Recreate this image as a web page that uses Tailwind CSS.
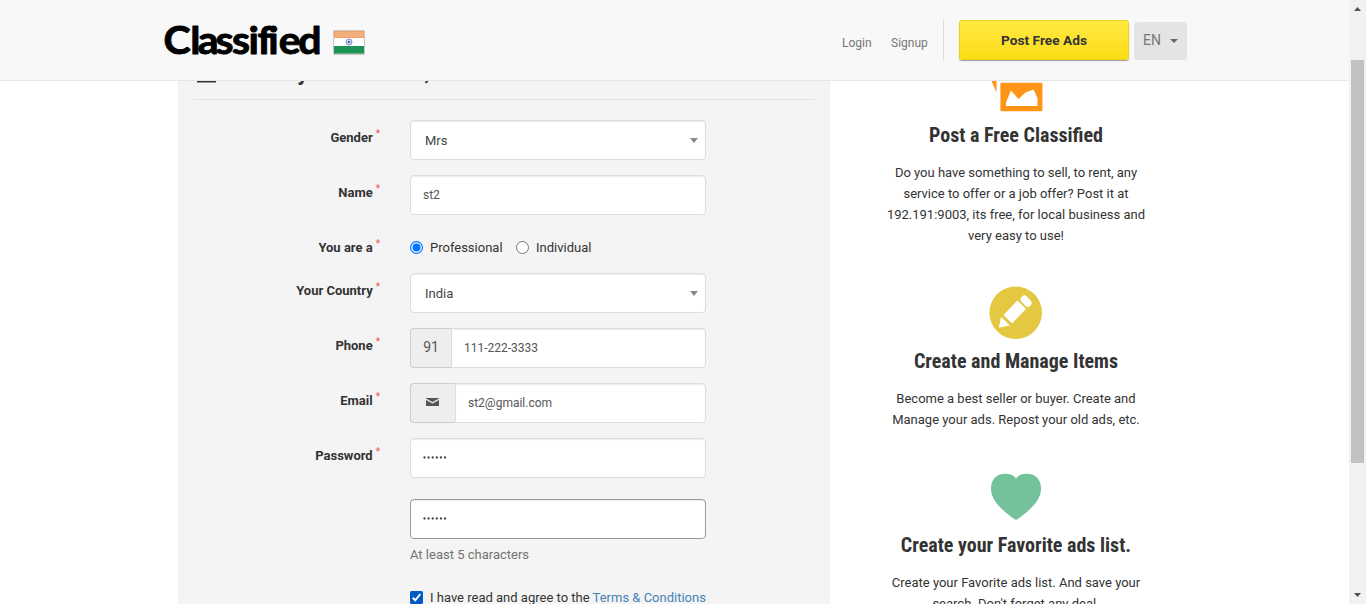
<!DOCTYPE html>
<html lang="en">
<head>
<meta charset="utf-8">
<title>Classified - Create your account</title>
<script src="https://cdn.jsdelivr.net/npm/@tailwindcss/browser@4"></script>
</head>
<body class="flex h-[604px] overflow-hidden bg-white font-['Roboto',sans-serif] text-[13px] text-[#333]">
<div class="flex w-[1349px] flex-col">
  <header class="flex h-[81px] shrink-0 border-b border-[#e7e7e7] bg-[#f8f8f8] pl-[164px]">
    <svg class="mt-[10px] h-[60px] w-[160px] shrink-0 overflow-visible" viewBox="0 0 160 60"><text transform="translate(0 43.500) scale(1.080 1)" x="-0.500 24.300 31.300 47.600 63 78.300 86.600 96.600 106.300 124.300" y="0" font-family="Lato, sans-serif" font-weight="700" font-size="38" fill="#000" stroke="#000" stroke-width=".9" stroke-linejoin="round">Classified</text></svg>
    <svg class="mt-[30px] ml-[9px] h-[25px] w-[32px] shrink-0" viewBox="0 0 32 25"><rect width="32" height="25" rx="1" fill="#c9c9c9"/><rect x="1" y="1" width="30" height="7" fill="#f2a263"/><rect x="2" y="2" width="28" height="5" fill="#f4b07c"/><rect x="1" y="8" width="30" height="8" fill="#fff"/><rect x="1" y="16" width="30" height="7.500" fill="#1a9354"/><circle cx="16" cy="12" r="3" fill="#dce3f2" stroke="#6f86bd" stroke-width=".9"/><circle cx="16" cy="12" r="1.300" fill="#4765ad"/></svg>
    <nav class="ml-[477px] flex text-[12px] text-[#777]">
      <a class="mt-[34px] w-[49px]">Login</a>
      <a class="mt-[34px] w-[52px]">Signup</a>
      <span class="mt-[20px] h-[40px] w-px bg-[#ddd]"></span>
      <a class="mt-[20px] ml-[15px] flex h-[40px] w-[170px] items-center justify-center rounded-[3px] border border-[#f0d318] bg-linear-to-b from-[#ffe93f] to-[#fcdc12] text-[13.700px] font-bold text-[#333] shadow-[0_1px_1px_#999]">Post Free Ads</a>
      <a class="mt-[22px] ml-[5px] flex h-[38px] w-[53px] items-center rounded-[3px] bg-[#e4e4e4] pb-px pl-[9px] text-[14px]">EN<svg class="mt-px ml-[9px] h-[4px] w-[8px]" viewBox="0 0 8 4"><path d="M0 0h8L4 4z" fill="#666"/></svg></a>
    </nav>
  </header>
  <div class="flex min-h-0 flex-1 overflow-hidden pl-[178px]">
    <main class="flex h-[600px] w-[652px] shrink-0 flex-col bg-[#f4f4f4] px-[15px]">
      <h2 class="-mt-[20px] flex h-[39px] shrink-0 border-b border-[#e2e2e2] pl-[4px] text-[24px] leading-[28px] font-bold whitespace-nowrap">
        <svg class="mt-[3px] mr-[6px] h-[19px] w-[19px]" viewBox="0 0 19 19"><circle cx="9.500" cy="5" r="4" fill="#333"/><path d="M0 18.500V15q0-5 5-5h9q5 0 5 5v3.500z" fill="#333"/></svg>
        <svg class="h-[30px] w-[300px] overflow-visible" viewBox="0 0 300 30"><text x="5" y="19" font-size="22" textLength="203" lengthAdjust="spacingAndGlyphs" fill="#333">Create your account,</text><text x="214" y="19" font-size="22" textLength="60" lengthAdjust="spacingAndGlyphs" fill="#333">Its free</text></svg>
      </h2>
      <form class="mt-[20px] grid shrink-0 grid-cols-[187px_296px] gap-x-[30px]">
        <label class="flex h-[55px] justify-end gap-[3px] pt-[8px] font-bold leading-[20px]">Gender<sup class="mt-px text-[10px] font-normal leading-[20px] text-[#f05050]">*</sup></label>
        <div class="flex h-[40px] items-center justify-between rounded-[4px] border border-[#ddd] bg-white pr-[7px] pl-[14px] text-[#444] shadow-[inset_0_1px_1px_#00000012]"><span class="pt-px">Mrs</span><svg class="h-[5px] w-[8px]" viewBox="0 0 8 5"><path d="M0 0h8L4 5z" fill="#888"/></svg></div>

        <label class="flex h-[55px] justify-end gap-[3px] pt-[8px] font-bold leading-[20px]">Name<sup class="mt-px text-[10px] font-normal leading-[20px] text-[#f05050]">*</sup></label>
        <div class="flex h-[40px] items-center rounded-[4px] border border-[#ddd] bg-white pl-[12px] text-[12px] text-[#555] shadow-[inset_0_1px_1px_#00000012]">st2</div>

        <label class="flex h-[43px] justify-end gap-[3px] pt-[8px] font-bold leading-[20px]">You are a<sup class="mt-px text-[10px] font-normal leading-[20px] text-[#f05050]">*</sup></label>
        <div class="flex items-start pt-[8px] leading-[20px]">
          <svg class="mt-[3px] mr-[7px] size-[13px]" viewBox="0 0 13 13"><circle cx="6.500" cy="6.500" r="5.900" fill="#fff" stroke="#0075ff" stroke-width="1.200"/><circle cx="6.500" cy="6.500" r="4" fill="#0075ff"/></svg><span class="w-[86px]">Professional</span>
          <svg class="mt-[3px] mr-[7px] size-[13px]" viewBox="0 0 13 13"><circle cx="6.500" cy="6.500" r="6" fill="#fff" stroke="#767676"/></svg>Individual
        </div>

        <label class="flex h-[55px] justify-end gap-[3px] pt-[8px] font-bold leading-[20px]">Your Country<sup class="mt-px text-[10px] font-normal leading-[20px] text-[#f05050]">*</sup></label>
        <div class="flex h-[40px] items-center justify-between rounded-[4px] border border-[#ddd] bg-white pr-[7px] pl-[14px] text-[#444] shadow-[inset_0_1px_1px_#00000012]"><span class="pt-px">India</span><svg class="h-[5px] w-[8px]" viewBox="0 0 8 5"><path d="M0 0h8L4 5z" fill="#888"/></svg></div>

        <label class="flex h-[55px] justify-end gap-[3px] pt-[8px] font-bold leading-[20px]">Phone<sup class="mt-px text-[10px] font-normal leading-[20px] text-[#f05050]">*</sup></label>
        <div class="flex h-[40px]">
          <span class="flex w-[41px] items-center justify-center rounded-l-[4px] border border-r-0 border-[#ccc] bg-[#eee] pb-px text-[14px] text-[#555]">91</span>
          <span class="flex flex-1 items-center rounded-r-[4px] border border-[#ddd] bg-white pl-[12px] text-[12px] text-[#555] shadow-[inset_0_1px_1px_#00000012]">111-222-3333</span>
        </div>

        <label class="flex h-[55px] justify-end gap-[3px] pt-[8px] font-bold leading-[20px]">Email<sup class="mt-px text-[10px] font-normal leading-[20px] text-[#f05050]">*</sup></label>
        <div class="flex h-[40px]">
          <span class="flex w-[45px] items-center justify-center rounded-l-[4px] border border-r-0 border-[#ccc] bg-[#eee]"><svg class="-mt-[2px] mr-px h-[8px] w-[13px]" viewBox="0 0 13 8"><path d="M0 0H13V.6L6.500 4 0 .6zM0 2l6.500 3.500L13 2v6H0z" fill="#555"/></svg></span>
          <span class="flex flex-1 items-center rounded-r-[4px] border border-[#ddd] bg-white pl-[12px] text-[12px] text-[#555] shadow-[inset_0_1px_1px_#00000012]">st2@gmail.com</span>
        </div>

        <label class="flex h-[61px] justify-end gap-[3px] pt-[8px] font-bold leading-[20px]">Password<sup class="mt-px text-[10px] font-normal leading-[20px] text-[#f05050]">*</sup></label>
        <div class="flex h-[40px] items-center rounded-[4px] border border-[#ddd] bg-white pl-[12px] shadow-[inset_0_1px_1px_#00000012]"><svg class="-mt-[2px] h-[3px] w-[24px]" viewBox="0 0 24 3" fill="#444"><circle cx="1.500" cy="1.500" r="1.150"/><circle cx="5.600" cy="1.500" r="1.150"/><circle cx="9.700" cy="1.500" r="1.150"/><circle cx="13.800" cy="1.500" r="1.150"/><circle cx="17.900" cy="1.500" r="1.150"/><circle cx="22" cy="1.500" r="1.150"/></svg></div>

        <div class="col-start-2">
          <div class="flex h-[40px] items-center rounded-[4px] border border-[#999] bg-white pl-[12px] shadow-[inset_0_1px_1px_#00000012]"><svg class="-mt-[2px] h-[3px] w-[24px]" viewBox="0 0 24 3" fill="#444"><circle cx="1.500" cy="1.500" r="1.150"/><circle cx="5.600" cy="1.500" r="1.150"/><circle cx="9.700" cy="1.500" r="1.150"/><circle cx="13.800" cy="1.500" r="1.150"/><circle cx="17.900" cy="1.500" r="1.150"/><circle cx="22" cy="1.500" r="1.150"/></svg></div>
          <p class="mt-[6px] leading-[20px] text-[#737373]">At least 5 characters</p>
          <p class="mt-[23px] flex leading-[20px] whitespace-nowrap"><svg class="mt-[3px] mr-[7px] size-[13px] shrink-0" viewBox="0 0 13 13"><rect width="13" height="13" rx="1.500" fill="#005bc4"/><path d="M2.700 6.700 5.300 9.300 10.300 3" fill="none" stroke="#fff" stroke-width="2"/></svg><span>I have read and agree to the <a class="text-[#4682b4]">Terms &amp; Conditions</a></span></p>
        </div>
      </form>
    </main>
    <aside class="ml-[30px] flex w-[312px] flex-col items-center text-center leading-[21px]">
      <svg class="h-[31px] w-[53px] shrink-0" viewBox="0 0 53 31"><path d="M1.500 0H6.500V11.500z" fill="#ff9416"/><rect x="10.400" y="1.800" width="42" height="28.500" rx="1" fill="#ff9416"/><path d="M16 25v-3.500L21 9.500l7.500 8.500 7-6.500 8-3 4 8.500v8z" fill="#fff"/></svg>
      <h3 class="mt-[11px] text-[20px] leading-[24px] font-bold font-['Roboto_Condensed',Roboto,sans-serif]">Post a Free Classified</h3>
      <p class="mt-[15px] w-[272px]">Do you have something to sell, to rent, any<br>service to offer or a job offer? Post it at<br>192.191:9003, its free, for local business and<br>very easy to use!</p>
      <svg class="mt-[40px] size-[54px] shrink-0" viewBox="0 0 54 54"><circle cx="26.700" cy="26.700" r="26.300" fill="#e5c842"/><g fill="#fff"><path d="m28.500 14.500 8.500 8.500-14 14.500L14.500 29z"/><path d="m12 31 9 8.500-11.200 2z"/><rect x="33.300" y="8.900" width="7.500" height="12.500" rx="3.700" transform="rotate(-43 37 15)"/></g></svg>
      <h3 class="mt-[9px] text-[20px] leading-[24px] font-bold font-['Roboto_Condensed',Roboto,sans-serif]">Create and Manage Items</h3>
      <p class="mt-[15px]">Become a best seller or buyer. Create and<br>Manage your ads. Repost your old ads, etc.</p>
      <svg class="mt-[43px] h-[47px] w-[50px] shrink-0" viewBox="0 0 50 47"><path d="M25 5.500C28 1.500 32 .8 36 .8 45 .8 50 7 50 15.500 50 29 37 38 27 46q-2 1.500-4 0C13 38 0 29 0 15.500 0 7 5 .8 14 .8 18 .8 22 1.500 25 5.500z" fill="#74c29b"/></svg>
      <h3 class="mt-[13px] text-[20px] leading-[24px] font-bold font-['Roboto_Condensed',Roboto,sans-serif]">Create your Favorite ads list.</h3>
      <p class="mt-[15px]">Create your Favorite ads list. And save your<br>search. Don't forget any deal.</p>
    </aside>
  </div>
</div>
<div class="flex h-[604px] w-[17px] flex-col items-center bg-[#f1f1f1]">
  <svg class="mt-[7px] h-[4px] w-[7px]" viewBox="0 0 7 4"><path d="M0 4 3.500 0 7 4z" fill="#505050"/></svg>
  <span class="mt-[49px] h-[403px] w-[13px] bg-[#c1c1c1]"></span>
  <svg class="mt-[130px] h-[4px] w-[7px]" viewBox="0 0 7 4"><path d="M0 0h7L3.500 4z" fill="#505050"/></svg>
</div>
</body>
</html>
